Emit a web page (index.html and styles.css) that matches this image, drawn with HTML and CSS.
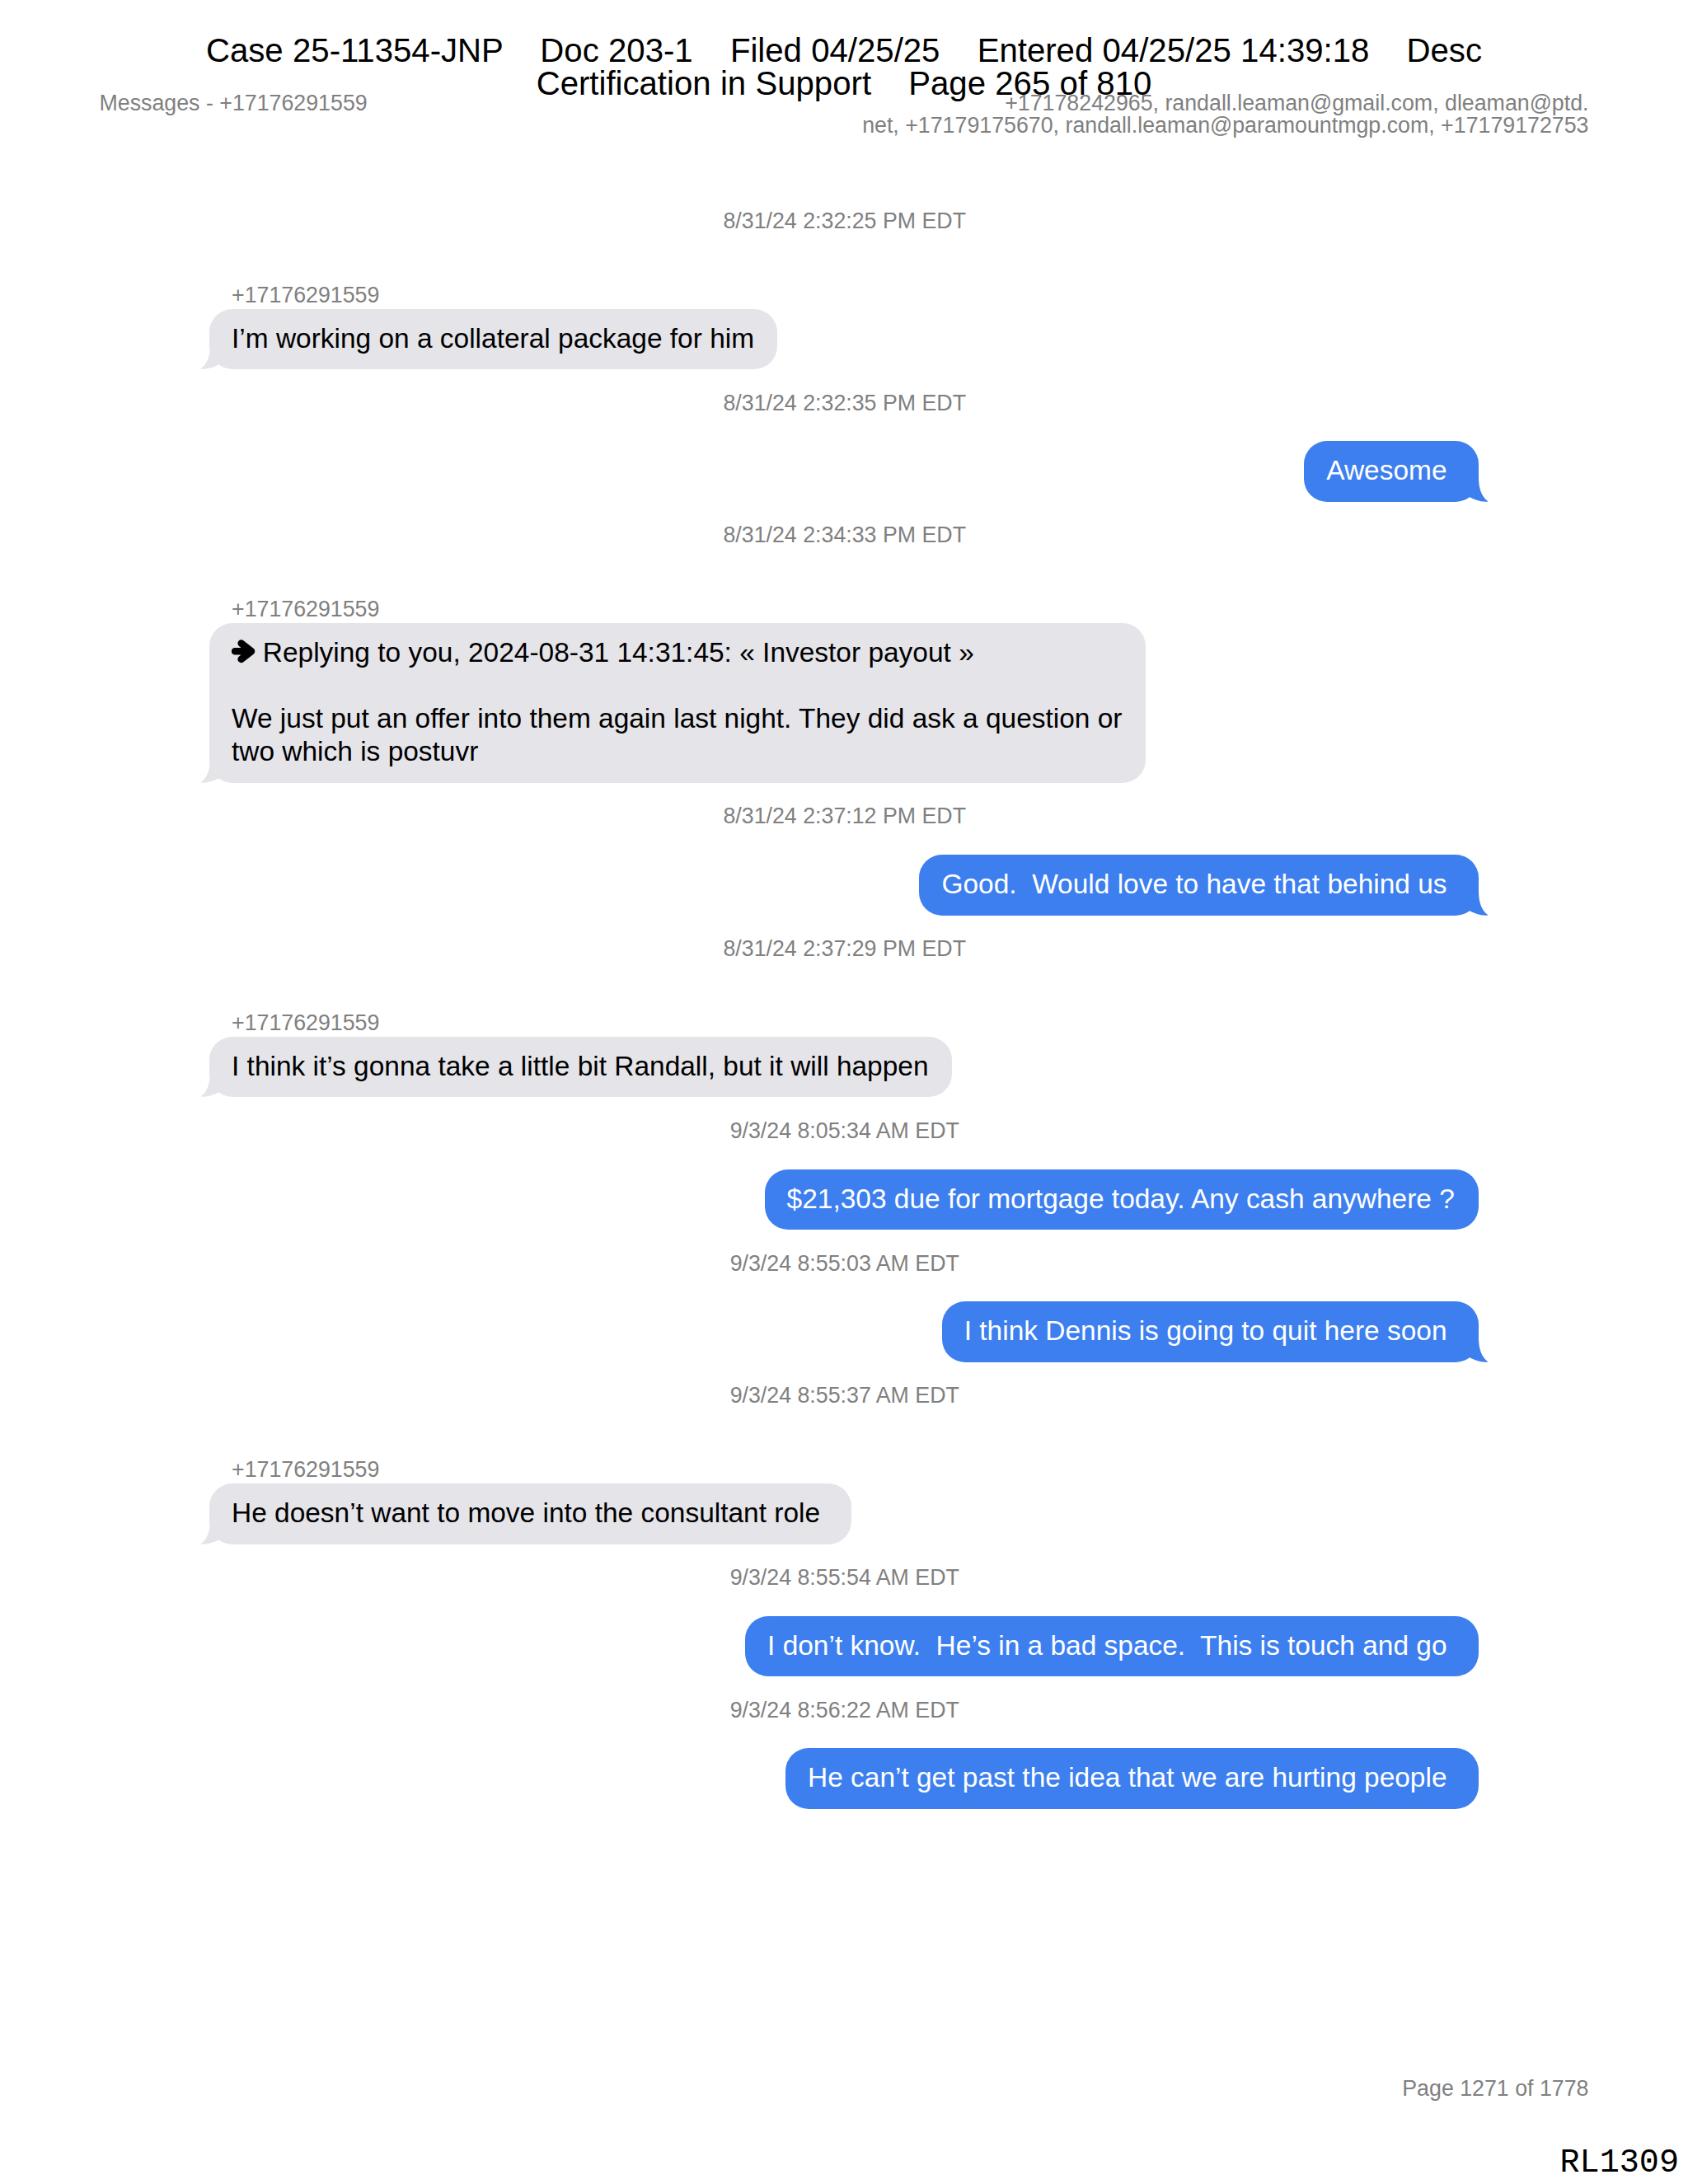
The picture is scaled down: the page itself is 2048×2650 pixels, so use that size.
FILE: index.html
```html
<!DOCTYPE html>
<html lang="en">
<head>
    <meta charset="UTF-8">
    <title>Messages - +17176291559</title>
    <link rel="stylesheet" href="styles.css">
</head>
<body>

<!-- bubble tail, reused by every message that closes a group -->
<svg class="defs" width="0" height="0">
    <symbol id="tail" viewBox="0 0 40 30">
        <path d="M0 0 L28 0 C28 13 31 23 39.5 29.5 C31 30.5 22 27 16 23.5 L8 14 Z"/>
    </symbol>
</svg>

<div class="stamp">
    <div class="line">Case 25-11354-JNP    Doc 203-1    Filed 04/25/25    Entered 04/25/25 14:39:18    Desc</div>
    <div class="line">Certification in Support    Page 265 of 810</div>
</div>

<header class="page-header">
    <div>Messages - +17176291559</div>
    <div class="recipients">+17178242965, randall.leaman@gmail.com, dleaman@ptd.<br>net, +17179175670, randall.leaman@paramountmgp.com, +17179172753</div>
</header>

<main class="chat">
    <div class="time">8/31/24 2:32:25 PM EDT</div>
    <div class="sender">+17176291559</div>
    <div class="bubble in">I’m working on a collateral package for him<svg class="tail"><use href="#tail"/></svg></div>

    <div class="time">8/31/24 2:32:35 PM EDT</div>
    <div class="bubble out">Awesome&nbsp;<svg class="tail"><use href="#tail"/></svg></div>

    <div class="time">8/31/24 2:34:33 PM EDT</div>
    <div class="sender">+17176291559</div>
    <div class="bubble in"><svg class="arrow" viewBox="0 0 28 28"><path d="M4 14 H21 M11.5 4.5 L23.5 14 L11.5 23.5"/><path class="head" d="M11.5 4.5 L23.5 14 L11.5 23.5 L14 14 Z"/></svg> Replying to you, 2024-08-31 14:31:45: « Investor payout »<br><br>We just put an offer into them again last night. They did ask a question or<br>two which is postuvr<svg class="tail"><use href="#tail"/></svg></div>

    <div class="time">8/31/24 2:37:12 PM EDT</div>
    <div class="bubble out">Good.  Would love to have that behind us&nbsp;<svg class="tail"><use href="#tail"/></svg></div>

    <div class="time">8/31/24 2:37:29 PM EDT</div>
    <div class="sender">+17176291559</div>
    <div class="bubble in">I think it’s gonna take a little bit Randall, but it will happen<svg class="tail"><use href="#tail"/></svg></div>

    <div class="time">9/3/24 8:05:34 AM EDT</div>
    <div class="bubble out">$21,303 due for mortgage today. Any cash anywhere ?</div>

    <div class="time">9/3/24 8:55:03 AM EDT</div>
    <div class="bubble out">I think Dennis is going to quit here soon&nbsp;<svg class="tail"><use href="#tail"/></svg></div>

    <div class="time">9/3/24 8:55:37 AM EDT</div>
    <div class="sender">+17176291559</div>
    <div class="bubble in">He doesn’t want to move into the consultant role&nbsp;<svg class="tail"><use href="#tail"/></svg></div>

    <div class="time">9/3/24 8:55:54 AM EDT</div>
    <div class="bubble out">I don’t know.  He’s in a bad space.  This is touch and go&nbsp;</div>

    <div class="time">9/3/24 8:56:22 AM EDT</div>
    <div class="bubble out">He can’t get past the idea that we are hurting people&nbsp;</div>
</main>

<footer class="page-footer">
    <div class="page-number">Page 1271 of 1778</div>
    <div class="bates">RL1309</div>
</footer>

</body>
</html>
```
FILE: styles.css
```css
body {
    font-family: "Liberation Sans", Arial, sans-serif;
    font-size: 26.77px;
    color: #808080;
    background: #fff;
    margin: 0;
    height: 2650px;
    position: relative;
    display: flex;
    flex-direction: column;
}
.defs {
    position: absolute;
}

/* filing stamp printed over the page header */
.stamp {
    position: absolute;
    top: 42px;
    left: 0;
    width: 100%;
    text-align: center;
    font-size: 40.15px;
    line-height: 40.15px;
    word-spacing: 0.15px;
    color: #000;
    z-index: 1;
}
.line {
    white-space: pre;
}

.page-header {
    display: flex;
    justify-content: space-between;
    padding: 112px 120.5px 0;
    line-height: 26.77px;
}
.recipients {
    text-align: right;
}

.chat {
    display: flex;
    flex-direction: column;
    padding: 62px 254px 0;
}
.time {
    text-align: center;
    line-height: 34px;
    margin: 23.4px 0 29.7px;
    padding-left: 1.5px;
}
.sender {
    line-height: 34px;
    margin-top: 26px;
    padding-left: 27px;
}
.bubble {
    position: relative;
    font-size: 33.46px;
    line-height: 40.15px;
    padding: 16px 28.2px 17.46px 27px;
    border-radius: 28px;
    white-space: pre;
}
.in {
    align-self: flex-start;
    background: #e5e4e9;
    color: #000;
}
.out {
    align-self: flex-end;
    background: #3d7fef;
    color: #fff;
    padding-right: 29.2px;
}
.tail {
    position: absolute;
    bottom: 0;
    width: 40px;
    height: 30px;
}
.in .tail {
    left: -11px;
    fill: #e5e4e9;
    transform: scaleX(-1);
}
.out .tail {
    right: -12px;
    fill: #3d7fef;
}
.arrow {
    width: 28.5px;
    height: 28.5px;
    vertical-align: -2px;
    fill: none;
    stroke: #000;
    stroke-width: 8.5;
    stroke-linecap: round;
    stroke-linejoin: round;
}
.arrow .head {
    fill: #000;
    stroke-width: 2;
}

.page-footer {
    margin-top: auto;
    text-align: right;
    line-height: 26.77px;
}
.page-number {
    padding-right: 120.5px;
}
.bates {
    font-family: "Liberation Mono", "Courier New", monospace;
    font-size: 40.15px;
    line-height: 46px;
    color: #000;
    padding: 54px 11px 2px 0;
}
```
